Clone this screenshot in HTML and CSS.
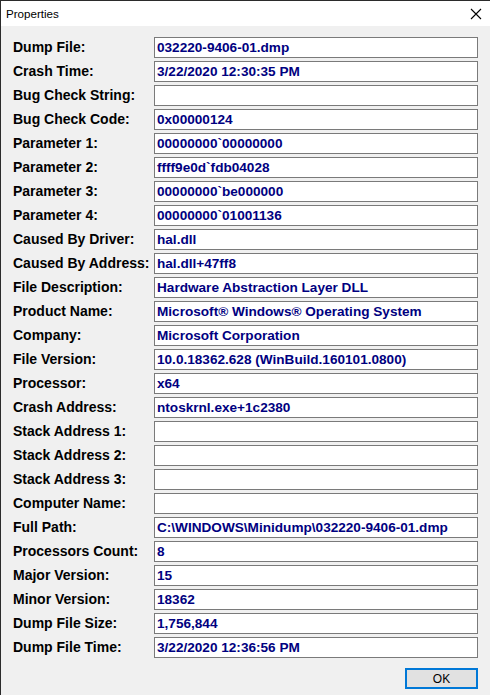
FILE: index.html
```html
<!DOCTYPE html>
<html>
<head>
<meta charset="utf-8">
<link rel="stylesheet" href="styles.css">
</head>
<body>
<div class="window">
  <div class="titlebar">
    <span class="title">Properties</span>
    <span class="close"><svg width="12" height="12" viewBox="0 0 12 12"><path d="M1 1 L11 11 M11 1 L1 11" stroke="#000" stroke-width="1.1" fill="none"/></svg></span>
  </div>
  <div class="content">
    <div class="grid">
      <div class="label">Dump File:</div><div class="box">032220-9406-01.dmp</div>
      <div class="label">Crash Time:</div><div class="box">3/22/2020 12:30:35 PM</div>
      <div class="label">Bug Check String:</div><div class="box"></div>
      <div class="label">Bug Check Code:</div><div class="box">0x00000124</div>
      <div class="label">Parameter 1:</div><div class="box">00000000`00000000</div>
      <div class="label">Parameter 2:</div><div class="box">ffff9e0d`fdb04028</div>
      <div class="label">Parameter 3:</div><div class="box">00000000`be000000</div>
      <div class="label">Parameter 4:</div><div class="box">00000000`01001136</div>
      <div class="label">Caused By Driver:</div><div class="box">hal.dll</div>
      <div class="label">Caused By Address:</div><div class="box">hal.dll+47ff8</div>
      <div class="label">File Description:</div><div class="box">Hardware Abstraction Layer DLL</div>
      <div class="label">Product Name:</div><div class="box">Microsoft® Windows® Operating System</div>
      <div class="label">Company:</div><div class="box">Microsoft Corporation</div>
      <div class="label">File Version:</div><div class="box">10.0.18362.628 (WinBuild.160101.0800)</div>
      <div class="label">Processor:</div><div class="box">x64</div>
      <div class="label">Crash Address:</div><div class="box">ntoskrnl.exe+1c2380</div>
      <div class="label">Stack Address 1:</div><div class="box"></div>
      <div class="label">Stack Address 2:</div><div class="box"></div>
      <div class="label">Stack Address 3:</div><div class="box"></div>
      <div class="label">Computer Name:</div><div class="box"></div>
      <div class="label">Full Path:</div><div class="box">C:\WINDOWS\Minidump\032220-9406-01.dmp</div>
      <div class="label">Processors Count:</div><div class="box">8</div>
      <div class="label">Major Version:</div><div class="box">15</div>
      <div class="label">Minor Version:</div><div class="box">18362</div>
      <div class="label">Dump File Size:</div><div class="box">1,756,844</div>
      <div class="label">Dump File Time:</div><div class="box">3/22/2020 12:36:56 PM</div>
    </div>
    <div class="buttons">
      <button class="ok">OK</button>
    </div>
  </div>
</div>
</body>
</html>
```
FILE: styles.css
```css
html, body {
  margin: 0;
  padding: 0;
  background: #f0f0f0;
}
.window {
  width: 490px;
  height: 695px;
  box-sizing: border-box;
  border-left: 1px solid #2b2b2b;
  border-top: 1px solid #2b2b2b;
  background: #f0f0f0;
  overflow: hidden;
}
.titlebar {
  height: 25px;
  background: #ffffff;
  display: flex;
  align-items: center;
  justify-content: space-between;
  padding-left: 5px;
  padding-right: 8px;
}
.title {
  font-family: "Liberation Sans", Arial, sans-serif;
  font-size: 11.6px;
  color: #000;
}
.close {
  display: flex;
  align-items: center;
}
.content {
  padding: 11px 12px 0 12px;
}
.grid {
  display: grid;
  grid-template-columns: 141px 324px;
  grid-auto-rows: 21px;
  row-gap: 3px;
}
.label, .box {
  font-family: "Liberation Sans", Arial, sans-serif;
  font-weight: bold;
  font-size: 14px;
  line-height: 19px;
  white-space: nowrap;
}
.label {
  color: #000;
  padding-top: 1px;
}
.box {
  box-sizing: border-box;
  background: #fff;
  border: 1px solid #7a7a7a;
  color: #000080;
  padding-left: 2px;
  font-size: 13.6px;
  overflow: hidden;
}
.buttons {
  display: flex;
  justify-content: flex-end;
  margin-top: 10px;
}
.ok {
  width: 73px;
  height: 21px;
  box-sizing: border-box;
  border: 2px solid #0078d7;
  background: #e1e1e1;
  font-family: "Liberation Sans", Arial, sans-serif;
  font-size: 12px;
  color: #000;
  padding: 0;
  margin: 0;
}
```
